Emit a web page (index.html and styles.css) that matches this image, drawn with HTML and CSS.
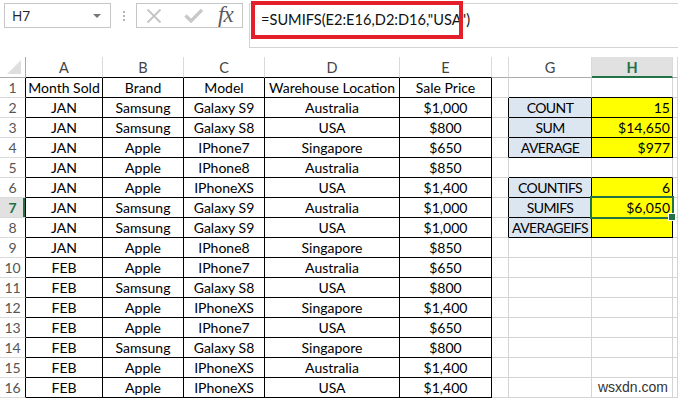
FILE: index.html
```html
<!DOCTYPE html>
<html>
<head>
<meta charset="utf-8">
<link rel="stylesheet" href="styles.css">
</head>
<body>
<div class="app">
  <div class="toolbar">
    <div class="namebox"><span class="nb-text">H7</span><span class="nb-arrow"></span></div>
    <div class="grip"><i></i><i></i><i></i></div>
    <div class="btns">
      <svg class="ic-x" width="16" height="16" viewBox="0 0 16 16"><path d="M1.5 1.5 L14.5 14.5 M14.5 1.5 L1.5 14.5" stroke="#c4c4c4" stroke-width="1.8" fill="none"/></svg>
      <svg class="ic-ok" width="19" height="15" viewBox="0 0 19 15"><path d="M1.5 7.5 L7 13 L18 2" stroke="#c8c8c8" stroke-width="3.2" fill="none"/></svg>
      <span class="fx">fx</span>
    </div>
    <div class="fbar">
      <span class="ftext">=SUMIFS(E2:E16,D2:D16,"USA")</span>
      <div class="redbox"></div>
    </div>
  </div>
  <div class="sheet">
    <div class="c ch corner"><span class="tri"></span></div>
    <div class="c ch tb">A</div><div class="c ch tb">B</div><div class="c ch tb">C</div><div class="c ch tb">D</div><div class="c ch tb">E</div><div class="c ch"></div><div class="c ch">G</div><div class="c ch sel">H</div><div class="c ch"></div>

    <div class="c rh">1</div><div class="c t">Month Sold</div><div class="c t">Brand</div><div class="c t">Model</div><div class="c t">Warehouse Location</div><div class="c t">Sale Price</div><div class="c"></div><div class="c bb"></div><div class="c bb"></div><div class="c"></div>

    <div class="c rh">2</div><div class="c t">JAN</div><div class="c t">Samsung</div><div class="c t">Galaxy S9</div><div class="c t">Australia</div><div class="c t">$1,000</div><div class="c br"></div><div class="c t lab">COUNT</div><div class="c t val">15</div><div class="c"></div>

    <div class="c rh">3</div><div class="c t">JAN</div><div class="c t">Samsung</div><div class="c t">Galaxy S8</div><div class="c t">USA</div><div class="c t">$800</div><div class="c br"></div><div class="c t lab">SUM</div><div class="c t val">$14,650</div><div class="c"></div>

    <div class="c rh">4</div><div class="c t">JAN</div><div class="c t">Apple</div><div class="c t">IPhone7</div><div class="c t">Singapore</div><div class="c t">$650</div><div class="c br"></div><div class="c t lab">AVERAGE</div><div class="c t val">$977</div><div class="c"></div>

    <div class="c rh">5</div><div class="c t">JAN</div><div class="c t">Apple</div><div class="c t">IPhone8</div><div class="c t">Australia</div><div class="c t">$850</div><div class="c"></div><div class="c bb"></div><div class="c bb"></div><div class="c"></div>

    <div class="c rh">6</div><div class="c t">JAN</div><div class="c t">Apple</div><div class="c t">IPhoneXS</div><div class="c t">USA</div><div class="c t">$1,400</div><div class="c br"></div><div class="c t lab">COUNTIFS</div><div class="c t val">6</div><div class="c"></div>

    <div class="c rh rsel">7</div><div class="c t">JAN</div><div class="c t">Samsung</div><div class="c t">Galaxy S9</div><div class="c t">Australia</div><div class="c t">$1,000</div><div class="c br"></div><div class="c t lab">SUMIFS</div><div class="c t val active">$6,050</div><div class="c"></div>

    <div class="c rh">8</div><div class="c t">JAN</div><div class="c t">Samsung</div><div class="c t">Galaxy S9</div><div class="c t">USA</div><div class="c t">$1,000</div><div class="c br"></div><div class="c t lab">AVERAGEIFS</div><div class="c t val"></div><div class="c"></div>

    <div class="c rh">9</div><div class="c t">JAN</div><div class="c t">Apple</div><div class="c t">IPhone8</div><div class="c t">Singapore</div><div class="c t">$850</div><div class="c"></div><div class="c"></div><div class="c"></div><div class="c"></div>

    <div class="c rh">10</div><div class="c t">FEB</div><div class="c t">Apple</div><div class="c t">IPhone7</div><div class="c t">Australia</div><div class="c t">$650</div><div class="c"></div><div class="c"></div><div class="c"></div><div class="c"></div>

    <div class="c rh">11</div><div class="c t">FEB</div><div class="c t">Samsung</div><div class="c t">Galaxy S8</div><div class="c t">USA</div><div class="c t">$800</div><div class="c"></div><div class="c"></div><div class="c"></div><div class="c"></div>

    <div class="c rh">12</div><div class="c t">FEB</div><div class="c t">Apple</div><div class="c t">IPhoneXS</div><div class="c t">Singapore</div><div class="c t">$1,400</div><div class="c"></div><div class="c"></div><div class="c"></div><div class="c"></div>

    <div class="c rh">13</div><div class="c t">FEB</div><div class="c t">Apple</div><div class="c t">IPhone7</div><div class="c t">USA</div><div class="c t">$650</div><div class="c"></div><div class="c"></div><div class="c"></div><div class="c"></div>

    <div class="c rh">14</div><div class="c t">FEB</div><div class="c t">Samsung</div><div class="c t">Galaxy S8</div><div class="c t">Singapore</div><div class="c t">$800</div><div class="c"></div><div class="c"></div><div class="c"></div><div class="c"></div>

    <div class="c rh">15</div><div class="c t">FEB</div><div class="c t">Apple</div><div class="c t">IPhoneXS</div><div class="c t">Australia</div><div class="c t">$1,400</div><div class="c"></div><div class="c"></div><div class="c"></div><div class="c"></div>

    <div class="c rh">16</div><div class="c t">FEB</div><div class="c t">Apple</div><div class="c t">IPhoneXS</div><div class="c t">USA</div><div class="c t">$1,400</div><div class="c"></div><div class="c"></div><div class="c wm-cell"><span class="wm">wsxdn.com</span></div><div class="c"></div>
  </div>
</div>
</body>
</html>
```

FILE: styles.css
```css
* { box-sizing: border-box; }
html, body { margin: 0; padding: 0; background: #fff; }
body { width: 678px; height: 399px; overflow: hidden; font-family: Lato, "Open Sans", sans-serif; }

.app { display: flex; flex-direction: column; }

.toolbar {
  display: flex;
  align-items: flex-start;
  height: 57px;
  padding-top: 3px;
}
.namebox {
  margin-left: 4px;
  width: 107px;
  height: 25px;
  border: 1px solid #c6c6c6;
  display: flex;
  align-items: center;
  justify-content: space-between;
  padding: 0 9px 0 7px;
}
.nb-text { font-family: "Open Sans", sans-serif; font-size: 14px; color: #222; }
.nb-arrow {
  width: 0; height: 0;
  border-left: 4px solid transparent;
  border-right: 4px solid transparent;
  border-top: 4px solid #777;
}
.grip {
  width: 25px;
  height: 25px;
  display: flex;
  flex-direction: column;
  align-items: center;
  justify-content: center;
  gap: 2px;
}
.grip i { display: block; width: 2px; height: 2px; background: #b4b4b4; }
.btns {
  width: 107px;
  height: 25px;
  border: 1px solid #c6c6c6;
  display: flex;
  align-items: center;
  padding-left: 9px;
}
.ic-x { margin-right: 22px; }
.ic-ok { margin-right: 15px; }
.fx {
  font-family: "Liberation Serif", serif;
  font-style: italic;
  font-size: 23px;
  line-height: 22px;
  color: #5a5a5a;
  letter-spacing: -1px;
  margin-top: -2px;
}
.fbar {
  position: relative;
  margin-left: 6px;
  flex: 1;
  height: 45px;
  border: 1px solid #d4d4d4;
  border-right: none;
  padding: 5px 0 0 11px;
}
.ftext { font-family: Lato, sans-serif; font-size: 14.6px; color: #111; }
.redbox {
  position: absolute;
  left: 1px; top: -3px;
  width: 212px; height: 38px;
  border: 4px solid #e3202a;
}

.sheet {
  display: grid;
  grid-template-columns: 26px 77px 81px 81px 135px 92px 17px 83px 81px 1fr;
  grid-auto-rows: 20px;
  grid-template-rows: 21px;
  font-size: 14px;
  color: #000;
}
.c {
  border-right: 1px solid #d4d4d4;
  border-bottom: 1px solid #d4d4d4;
  display: flex;
  align-items: flex-end;
  justify-content: center;
  padding-bottom: 1px;
  white-space: nowrap;
  overflow: hidden;
  line-height: 17px;
  min-width: 0;
}
.ch {
  color: #444;
  font-size: 14.5px;
  border-right-color: #dadada;
  border-bottom-color: #ababab;
  align-items: center;
  padding-bottom: 0;
  padding-top: 1px;
}
.ch.tb { border-bottom-color: #000; }
.corner { position: relative; border-right-color: #ababab; }
.tri {
  position: absolute; right: 4px; bottom: 3px;
  width: 0; height: 0;
  border-left: 14px solid transparent;
  border-bottom: 14px solid #dfdfdf;
}
.ch.sel {
  background: #e1e1e1;
  color: #217346;
  font-weight: bold;
  border-bottom: 2px solid #217346;
}
.rh {
  color: #555;
  font-size: 14px;
  border-right-color: #000;
  border-bottom-color: #dadada;
  justify-content: center;
}
.rh.rsel {
  background: #e1e1e1;
  color: #217346;
  font-weight: bold;
  box-shadow: inset -2px 0 0 #217346;
}
.t { border-right-color: #000; border-bottom-color: #000; }
.bb { border-bottom-color: #000; }
.br { border-right-color: #000; }
.lab { background: #dce6f1; letter-spacing: -0.6px; }
.val { background: #ffff00; justify-content: flex-end; padding-right: 2px; }
.active { position: relative; overflow: visible; }
.active::before {
  content: "";
  position: absolute;
  left: -2px; top: -2px; right: -2px; bottom: -2px;
  border: 2px solid #217346;
}
.active::after {
  content: "";
  position: absolute;
  right: -4px; bottom: -4px;
  width: 6px; height: 6px;
  background: #217346;
  border: 1px solid #fff;
}
.wm-cell { overflow: visible; justify-content: flex-end; }
.wm {
  font-family: "Liberation Sans", sans-serif;
  font-size: 14px;
  color: #333;
  margin-right: 4px;
}
```
